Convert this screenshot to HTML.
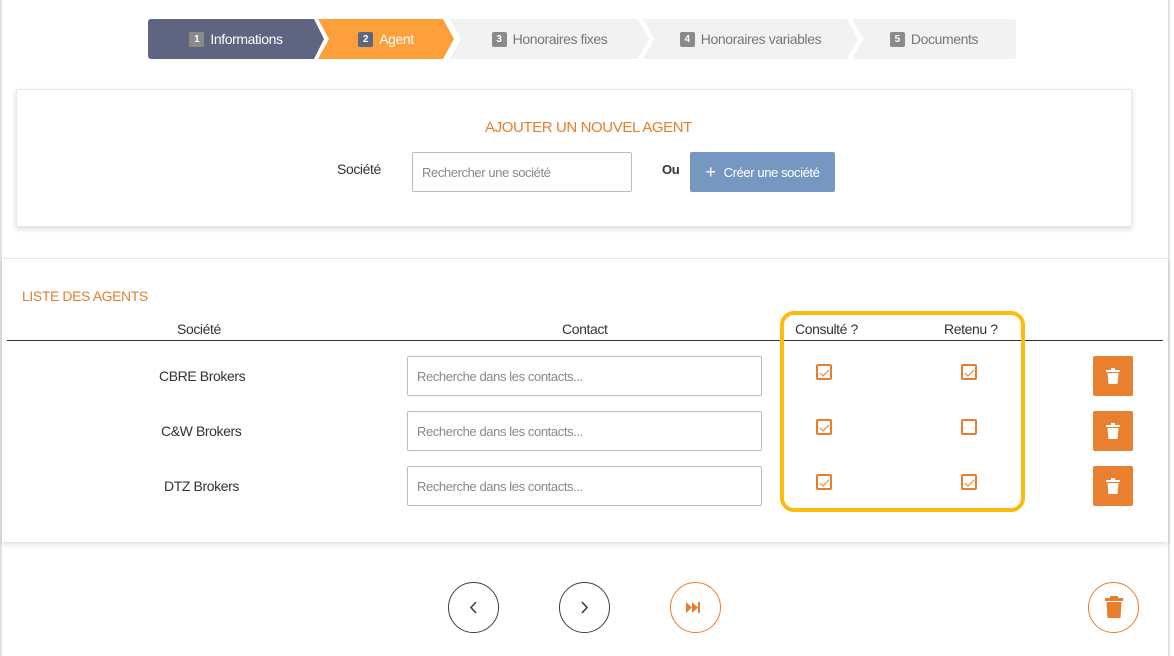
<!DOCTYPE html>
<html><head><meta charset="utf-8"><style>
*{box-sizing:border-box;margin:0;padding:0}
body{width:1174px;height:656px;background:#fff;font-family:"Liberation Sans",sans-serif;color:#333;position:relative;overflow:hidden}
.a{position:absolute}
.step{position:absolute;top:19px;height:40px;display:flex;align-items:center;justify-content:center;font-size:14px;letter-spacing:-0.4px}
.num{display:inline-block;width:15px;height:15px;border-radius:2px;background:#8a8a8a;color:#fff;font-size:10px;line-height:15px;text-align:center;margin-right:6px;font-weight:bold;letter-spacing:0}
.inp{position:absolute;border:1px solid #bdbdbd;border-radius:2px;font-size:13px;color:#888;padding-left:9px;display:flex;align-items:center;letter-spacing:-0.4px}
.cb{position:absolute;width:16px;height:16px;border:2px solid #e67e2e;border-radius:2px}
.cb svg{position:absolute;left:1px;top:1px}
.del{position:absolute;width:40px;height:40px;background:#e8802f;border-radius:2px;left:1093px}
.del svg{position:absolute;left:13px;top:12px}
.t{position:absolute;font-size:14px;letter-spacing:-0.4px;white-space:nowrap}
.circ{position:absolute;width:51px;height:51px;border-radius:50%;top:582px}
</style></head><body>
<div class="a" style="left:0;top:0;width:2px;height:656px;background:#e2e2e2"></div>
<div class="a" style="left:1168px;top:0;width:2px;height:656px;background:#e2e2e2"></div>

<div class="step" style="left:148px;width:176px;background:#5f6580;color:#fff;border-radius:3px 0 0 3px;clip-path:polygon(0 0,166px 0,176px 50%,166px 100%,0 100%)"><span class="num">1</span>Informations</div>
<div class="step" style="left:318px;width:136px;background:#fda03b;color:#fff;clip-path:polygon(0 0,125px 0,136px 50%,125px 100%,0 100%,11px 50%)"><span class="num" style="background:#5f6580">2</span>Agent</div>
<div class="step" style="left:450px;width:199px;background:#f2f2f2;color:#777;clip-path:polygon(0 0,188px 0,199px 50%,188px 100%,0 100%,11px 50%)"><span class="num">3</span>Honoraires fixes</div>
<div class="step" style="left:643px;width:215px;background:#f2f2f2;color:#777;clip-path:polygon(0 0,204px 0,215px 50%,204px 100%,0 100%,11px 50%)"><span class="num">4</span>Honoraires variables</div>
<div class="step" style="left:852px;width:164px;background:#f2f2f2;color:#777;border-radius:0 3px 3px 0;clip-path:polygon(0 0,164px 0,164px 100%,0 100%,11px 50%)"><span class="num">5</span>Documents</div>

<div class="a" style="left:16px;top:89px;width:1116px;height:138px;border:1px solid #e8e8e8;box-shadow:0 2px 5px rgba(0,0,0,.15)"></div>
<div class="t" style="left:485px;top:119px;color:#e67e2e;font-size:15px">AJOUTER UN NOUVEL AGENT</div>
<div class="t" style="left:337px;top:161px;color:#333">Société</div>
<div class="inp" style="left:412px;top:152px;width:220px;height:40px">Rechercher une société</div>
<div class="t" style="left:662px;top:162px;font-weight:bold;font-size:13px">Ou</div>
<div class="a" style="left:690px;top:152px;width:145px;height:40px;background:#7597c0;border-radius:2px;color:#fff;font-size:13px;display:flex;align-items:center;justify-content:center;letter-spacing:-0.4px"><span style="font-size:18px;margin-right:8px;line-height:1">+</span>Créer une société</div>

<div class="a" style="left:2px;top:258px;width:1166px;height:284px;border-top:1px solid #e8e8e8;box-shadow:0 2px 5px rgba(0,0,0,.15)"></div>
<div class="t" style="left:22px;top:288px;color:#e67e2e">LISTE DES AGENTS</div>
<div class="t" style="left:177px;top:321px">Société</div>
<div class="t" style="left:562px;top:321px">Contact</div>
<div class="t" style="left:795px;top:321px">Consulté ?</div>
<div class="t" style="left:944px;top:321px">Retenu ?</div>
<div class="a" style="left:7px;top:340px;width:1156px;height:1px;background:#333"></div>

<div class="t" style="left:159px;top:368px">CBRE Brokers</div>
<div class="t" style="left:161px;top:423px">C&amp;W Brokers</div>
<div class="t" style="left:164px;top:478px">DTZ Brokers</div>
<div class="inp" style="left:407px;top:356px;width:355px;height:40px">Recherche dans les contacts...</div>
<div class="inp" style="left:407px;top:411px;width:355px;height:40px">Recherche dans les contacts...</div>
<div class="inp" style="left:407px;top:466px;width:355px;height:40px">Recherche dans les contacts...</div>

<div class="a" style="left:780px;top:311px;width:245px;height:201px;border:4px solid #fdbb0d;border-radius:14px"></div>

<div class="cb" style="left:816px;top:364px"><svg width="11" height="11"><path d="M1 6 L4 9 L10 3" stroke="#e67e2e" stroke-width="1" fill="none"/></svg></div>
<div class="cb" style="left:961px;top:364px"><svg width="11" height="11"><path d="M1 6 L4 9 L10 3" stroke="#e67e2e" stroke-width="1" fill="none"/></svg></div>
<div class="cb" style="left:816px;top:419px"><svg width="11" height="11"><path d="M1 6 L4 9 L10 3" stroke="#e67e2e" stroke-width="1" fill="none"/></svg></div>
<div class="cb" style="left:961px;top:419px"></div>
<div class="cb" style="left:816px;top:474px"><svg width="11" height="11"><path d="M1 6 L4 9 L10 3" stroke="#e67e2e" stroke-width="1" fill="none"/></svg></div>
<div class="cb" style="left:961px;top:474px"><svg width="11" height="11"><path d="M1 6 L4 9 L10 3" stroke="#e67e2e" stroke-width="1" fill="none"/></svg></div>

<div class="del" style="top:356px"><svg width="14" height="16"><rect x="0" y="2" width="14" height="2" fill="#fff"/><rect x="5" y="0" width="4" height="2" fill="#fff"/><path d="M1.5 5 H12.5 L11.5 16 H2.5 Z" fill="#fff"/></svg></div>
<div class="del" style="top:411px"><svg width="14" height="16"><rect x="0" y="2" width="14" height="2" fill="#fff"/><rect x="5" y="0" width="4" height="2" fill="#fff"/><path d="M1.5 5 H12.5 L11.5 16 H2.5 Z" fill="#fff"/></svg></div>
<div class="del" style="top:466px"><svg width="14" height="16"><rect x="0" y="2" width="14" height="2" fill="#fff"/><rect x="5" y="0" width="4" height="2" fill="#fff"/><path d="M1.5 5 H12.5 L11.5 16 H2.5 Z" fill="#fff"/></svg></div>

<div class="circ" style="left:448px;border:1px solid #3a3d55"><svg width="49" height="49"><path d="M27 19 L22 24.5 L27 30" stroke="#3a3d55" stroke-width="1.6" fill="none"/></svg></div>
<div class="circ" style="left:559px;border:1px solid #3a3d55"><svg width="49" height="49"><path d="M22 19 L27 24.5 L22 30" stroke="#3a3d55" stroke-width="1.6" fill="none"/></svg></div>
<div class="circ" style="left:670px;border:1px solid #e67e2e"><svg width="49" height="49"><path d="M15 19 L21 24.5 L15 30 Z M21 19 L27 24.5 L21 30 Z" fill="#e67e2e"/><rect x="27" y="19" width="2" height="11" fill="#e67e2e"/></svg></div>
<div class="circ" style="left:1088px;border:1px solid #e67e2e"><svg width="49" height="49"><rect x="16" y="15" width="18" height="3" fill="#e67e2e"/><rect x="21" y="13" width="8" height="2" fill="#e67e2e"/><path d="M17.5 19 H32.5 L31.5 35 H18.5 Z" fill="#e67e2e"/></svg></div>
</body></html>
